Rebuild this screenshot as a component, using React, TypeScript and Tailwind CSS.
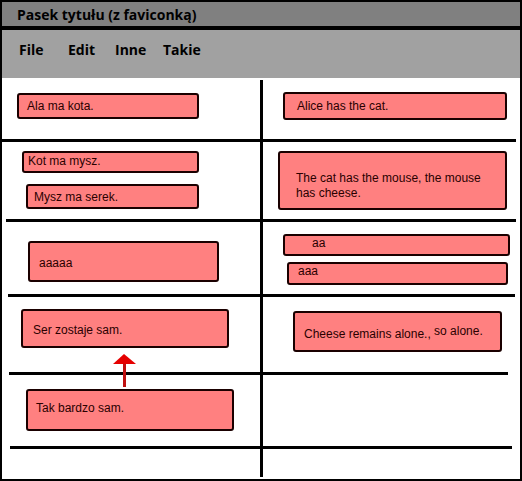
type Box = {
  text: React.ReactNode;
  className: string;
};

const Pill = ({ text, className }: Box) => (
  <div
    className={`flex items-center rounded-[3px] border-2 border-[#1a0000] bg-[#ff8080] text-[12px] leading-[15px] text-[#2a0000] ${className}`}
  >
    {text}
  </div>
);

const Divider = () => <div className="w-[3px] bg-black" />;

const Line = ({ className }: { className: string }) => (
  <div className={`h-[3px] shrink-0 bg-black ${className}`} />
);

const menu = [
  { label: 'File', w: 'w-[49px]' },
  { label: 'Edit', w: 'w-[47px]' },
  { label: 'Inne', w: 'w-[48px]' },
  { label: 'Takie', w: 'w-auto' },
];

export default function App() {
  return (
    <div
      className="relative flex h-[481px] w-[522px] flex-col border-2 border-black bg-white"
      style={{ fontFamily: '"Liberation Sans", Arial, sans-serif' }}
    >
      {/* title bar */}
      <div className="flex h-[24px] shrink-0 items-center bg-[#808080] pl-[15px] font-['Open_Sans',sans-serif] text-[14px] font-bold text-black">
        Pasek tytułu (z faviconką)
      </div>
      <div className="h-[4px] shrink-0 bg-black" />
      {/* menu bar */}
      <div className="flex h-[48px] shrink-0 items-center bg-[#a1a1a1] pb-[10px] pl-[17px] font-['Open_Sans',sans-serif] text-[14px] font-bold text-black">
        {menu.map((m) => (
          <span key={m.label} className={m.w}>
            {m.label}
          </span>
        ))}
      </div>

      {/* row 1 */}
      <div className="grid h-[61px] shrink-0 grid-cols-[258px_3px_1fr]">
        <div className="pt-[15px] pl-[15px]">
          <Pill text="Ala ma kota." className="h-[26px] w-[182px] pl-[8px]" />
        </div>
        <div className="mt-[2px] bg-black" />
        <div className="pt-[14px] pl-[20px]">
          <Pill text="Alice has the cat." className="h-[28px] w-[224px] pl-[12px]" />
        </div>
      </div>
      <Line className="mr-[4px]" />

      {/* row 2 */}
      <div className="grid h-[77px] shrink-0 grid-cols-[258px_3px_1fr]">
        <div className="flex flex-col items-start gap-[11px] pt-[9px]">
          <Pill text="Kot ma mysz." className="ml-[20px] h-[22px] w-[177px] items-start pl-[4px] pt-[1px]" />
          <Pill text="Mysz ma serek." className="ml-[24px] h-[25px] w-[173px] pl-[6px] pt-[2px]" />
        </div>
        <Divider />
        <div className="pt-[9px] pl-[15px]">
          <Pill
            text={
              <span>
                The cat has the mouse, the mouse
                <br />
                has cheese.
              </span>
            }
            className="h-[59px] w-[229px] pl-[16px] pt-[10px]"
          />
        </div>
      </div>
      <Line className="ml-[4px] mr-[4px]" />

      {/* row 3 */}
      <div className="grid h-[72px] shrink-0 grid-cols-[258px_3px_1fr]">
        <div className="pt-[19px] pl-[26px]">
          <Pill text="aaaaa" className="h-[41px] w-[191px] pl-[9px] pt-[4px]" />
        </div>
        <Divider />
        <div className="flex flex-col items-start gap-[6px] pt-[12px]">
          <Pill text="aa" className="ml-[20px] h-[22px] w-[227px] items-start pl-[27px]" />
          <Pill text="aaa" className="ml-[24px] h-[23px] w-[221px] items-start pl-[9px]" />
        </div>
      </div>
      <Line className="ml-[6px] mr-[5px]" />

      {/* row 4 */}
      <div className="grid h-[75px] shrink-0 grid-cols-[258px_3px_1fr]">
        <div className="pt-[12px] pl-[19px]">
          <Pill text="Ser zostaje sam." className="h-[39px] w-[208px] pl-[10px] pt-[3px]" />
        </div>
        <Divider />
        <div className="pt-[14px] pl-[30px]">
          <Pill
            text={
              <span>
                Cheese remains alone.,{' '}
                <span className="align-[3px]">so alone.</span>
              </span>
            }
            className="h-[41px] w-[209px] pl-[9px] pt-[2px]"
          />
        </div>
      </div>
      <Line className="ml-[7px] mr-[12px]" />

      {/* row 5 */}
      <div className="grid h-[71px] shrink-0 grid-cols-[258px_3px_1fr]">
        <div className="pt-[14px] pl-[24px]">
          <Pill text="Tak bardzo sam." className="h-[42px] w-[208px] pl-[8px] pb-[3px]" />
        </div>
        <Divider />
        <div />
      </div>
      <Line className="ml-[8px] mr-[8px]" />

      {/* row 6 */}
      <div className="grid flex-1 grid-cols-[258px_3px_1fr]">
        <div />
        <div className="mb-[2px] bg-black" />
        <div />
      </div>

      {/* arrow pointing up at "Ser zostaje sam." */}
      <svg
        className="absolute left-[108px] top-[349px]"
        width="28"
        height="38"
        viewBox="0 0 28 38"
      >
        <polygon points="14,3 3,13 26,13" fill="#e50000" />
        <rect x="13" y="13" width="3" height="23" fill="#c01010" />
      </svg>
    </div>
  );
}
